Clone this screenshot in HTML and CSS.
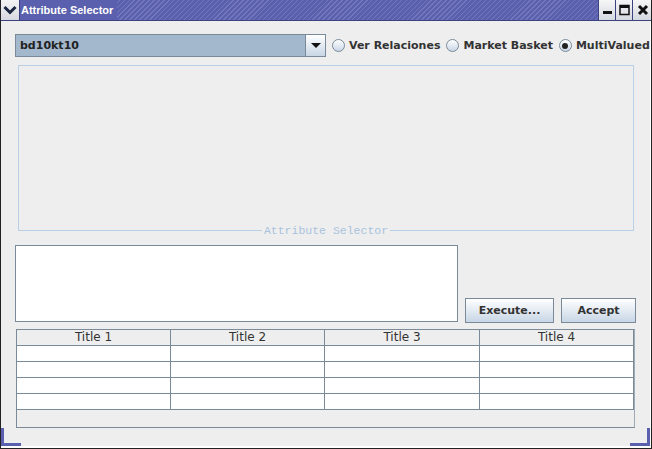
FILE: index.html
```html
<!DOCTYPE html>
<html>
<head>
<meta charset="utf-8">
<link rel="stylesheet" href="styles.css">
</head>
<body>
<div class="window">
  <div class="titlebar">
    <div class="sysmenu">
      <svg width="14" height="10" viewBox="0 0 14 10"><path d="M1.5 2 L7 7.5 L12.5 2" fill="none" stroke="#1a2540" stroke-width="3"/></svg>
    </div>
    <div class="title">Attribute Selector</div>
    <div class="stripes"></div>
    <div class="tbtn"><svg width="12" height="12" viewBox="0 0 12 12"><rect x="2" y="7" width="9" height="3" fill="#111"/></svg></div>
    <div class="tbtn"><svg width="12" height="12" viewBox="0 0 12 12"><rect x="2" y="1.5" width="9" height="9" fill="none" stroke="#111" stroke-width="1.5"/><rect x="2" y="1" width="9" height="3" fill="#111"/></svg></div>
    <div class="tbtn last"><svg width="12" height="12" viewBox="0 0 12 12"><path d="M2 2 L10 10 M10 2 L2 10" stroke="#111" stroke-width="3"/></svg></div>
  </div>
  <div class="content">
    <div class="toprow">
      <div class="combo">
        <div class="combo-field">bd10kt10</div>
        <div class="combo-btn"><svg width="10" height="6" viewBox="0 0 10 6"><path d="M0 0 H10 L5 5 Z" fill="#111"/></svg></div>
      </div>
      <label class="radio"><span class="dot"></span>Ver Relaciones</label>
      <label class="radio"><span class="dot"></span>Market Basket</label>
      <label class="radio"><span class="dot on"></span>MultiValued</label>
    </div>
    <div class="titled">
      <span class="titled-label">Attribute Selector</span>
    </div>
    <div class="midrow">
      <div class="textarea"></div>
      <div class="buttons">
        <div class="btn execute">Execute...</div>
        <div class="btn accept">Accept</div>
      </div>
    </div>
    <div class="tablepane">
      <div class="grid">
        <div class="th">Title 1</div><div class="th">Title 2</div><div class="th">Title 3</div><div class="th">Title 4</div>
        <div class="td"></div><div class="td"></div><div class="td"></div><div class="td"></div>
        <div class="td"></div><div class="td"></div><div class="td"></div><div class="td"></div>
        <div class="td"></div><div class="td"></div><div class="td"></div><div class="td"></div>
        <div class="td"></div><div class="td"></div><div class="td"></div><div class="td"></div>
      </div>
    </div>
  </div>
  <div class="corner bl"></div>
  <div class="corner br"></div>
</div>
</body>
</html>
```
FILE: styles.css
```css
* { box-sizing: border-box; }
html, body { margin: 0; padding: 0; background: #eeeeee; }
body { font-family: "DejaVu Sans", "Liberation Sans", sans-serif; }

.window {
  position: relative;
  width: 652px;
  height: 449px;
  background: #eeeeee;
  border-left: 1px solid #222;
  border-right: 1px solid #222;
  border-bottom: 1px solid #222;
  box-shadow: inset -1px -2px 0 #ffffff, inset 0 -3px 0 #eeeeee;
  overflow: hidden;
}

.titlebar {
  display: flex;
  height: 21px;
  background: #5a5fae;
  border-bottom: 1px solid #3c417f;
  margin-left: -1px;
  margin-right: -1px;
}
.sysmenu {
  width: 20px;
  height: 20px;
  background: linear-gradient(#f4f4f4, #d6d9e0);
  display: flex;
  align-items: center;
  justify-content: center;
  border-right: 1px solid #3c417f;
}
.title {
  color: #ffffff;
  font-family: "Liberation Sans", Arial, sans-serif;
  font-weight: bold;
  font-size: 11px;
  line-height: 20px;
  padding: 0 4px 0 1px;
}
.stripes {
  flex: 1;
  height: 20px;
  background: repeating-linear-gradient(135deg, #5a5fae 0 1.5px, #7378bd 1.5px 2.5px, #5a5fae 2.5px 3.5px);
}
.tbtn {
  width: 17px;
  height: 20px;
  background: linear-gradient(#f6f6f6, #d4d8e0);
  border-left: 1px solid #3c417f;
  display: flex;
  align-items: center;
  justify-content: center;
}
.tbtn.last { width: 20px; }

.content {
  padding: 0 0 0 14px;
}

.toprow {
  display: flex;
  align-items: center;
  margin-top: 13px;
  height: 23px;
}
.combo {
  flex-shrink: 0;
  display: flex;
  width: 311px;
  height: 23px;
  border: 1px solid #7a8a99;
  background: #a3b8cc;
}
.combo-field {
  flex: 1;
  font-weight: bold;
  font-size: 11px;
  color: #222;
  line-height: 21px;
  padding-left: 4px;
}
.combo-btn {
  width: 20px;
  background: linear-gradient(#ffffff, #c8d6e6);
  border-left: 1px solid #7a8a99;
  display: flex;
  align-items: center;
  justify-content: center;
}
.radio {
  display: flex;
  align-items: center;
  font-weight: bold;
  font-size: 11px;
  color: #333;
  margin-left: 6px;
  white-space: nowrap;
}
.dot {
  width: 13px;
  height: 13px;
  border-radius: 50%;
  border: 1px solid #7a8a99;
  background: linear-gradient(#ffffff, #c8d6e6);
  margin-right: 4px;
  position: relative;
}
.dot.on::after {
  content: "";
  position: absolute;
  left: 2.5px;
  top: 2.5px;
  width: 6px;
  height: 6px;
  border-radius: 50%;
  background: #222;
}

.titled {
  position: relative;
  margin-top: 8px;
  margin-left: 3px;
  width: 616px;
  height: 166px;
  border: 1px solid #b8cfe5;
}
.titled-label {
  position: absolute;
  left: 50%;
  bottom: -7px;
  transform: translateX(-50%);
  background: #eeeeee;
  padding: 0 2px;
  font-family: "Liberation Mono", "DejaVu Sans Mono", monospace;
  font-size: 11.5px;
  line-height: 12px;
  color: #a9c3df;
  white-space: nowrap;
}

.midrow {
  display: flex;
  align-items: flex-end;
  margin-top: 14px;
}
.textarea {
  width: 443px;
  height: 77px;
  background: #ffffff;
  border: 1px solid #7a8a99;
}
.buttons {
  display: flex;
  gap: 7px;
  margin-left: 7px;
  margin-bottom: -1px;
}
.btn {
  height: 25px;
  border: 1px solid #7a8a99;
  background: linear-gradient(#ffffff, #c8d6e6);
  font-weight: bold;
  font-size: 11px;
  color: #333;
  display: flex;
  align-items: center;
  justify-content: center;
}
.execute { width: 89px; }
.accept { width: 75px; }

.tablepane {
  margin-top: 7px;
  margin-left: 1px;
  width: 619px;
  height: 99px;
  border: 1px solid #7a8a99;
  border-right-color: #a0aab4;
  background: #eeeeee;
}
.grid {
  display: grid;
  grid-template-columns: 154px 154px 155px 154px;
  width: 617px;
}
.th {
  height: 16px;
  background: #eeeeee;
  border-right: 1px solid #7a8a99;
  border-bottom: 1px solid #7a8a99;
  font-size: 12px;
  color: #333;
  text-align: center;
  line-height: 15px;
}
.td {
  height: 16px;
  background: #ffffff;
  border-right: 1px solid #7a8a99;
  border-bottom: 1px solid #7a8a99;
}

.corner {
  position: absolute;
  bottom: 2px;
  width: 20px;
  height: 18px;
}
.corner.bl {
  left: 0;
  border-left: 3px solid #5a5fae;
  border-bottom: 3px solid #5a5fae;
}
.corner.br {
  right: 1px;
  border-right: 3px solid #5a5fae;
  border-bottom: 3px solid #5a5fae;
}
```
